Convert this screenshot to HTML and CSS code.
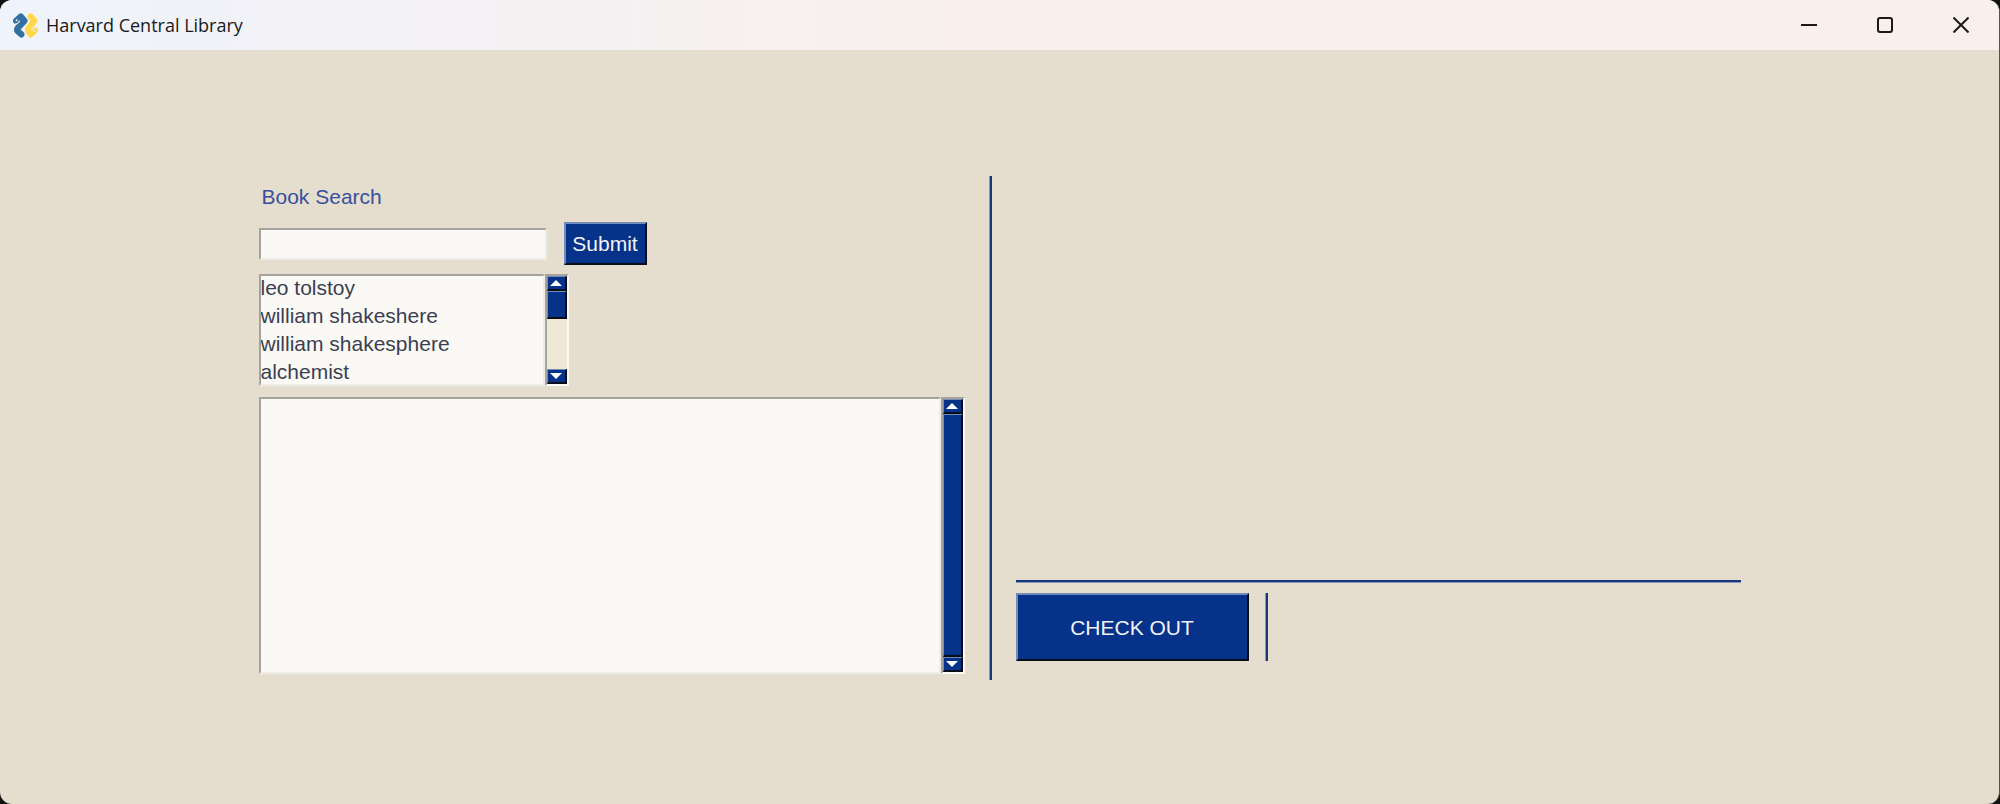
FILE: index.html
```html
<!DOCTYPE html>
<html lang="en">
<head>
<meta charset="utf-8">
<title>Harvard Central Library</title>
<link rel="stylesheet" href="styles.css">
</head>
<body>
<div class="window">
  <header class="titlebar">
    <svg class="app-icon" viewBox="0 0 24 24" aria-hidden="true">
      <g fill="none" stroke-width="6" stroke-linecap="round" stroke-linejoin="round">
        <path stroke="#ffd94a" d="M17 3.500l3.500 4L15 14.500q-1 1.500 0 3l2 3 4-4"/>
        <path stroke="#34709f" d="M3 7.500l4.500-4 3.500 4L4.500 14.500q-1 1.500 0 3l3.500 3"/>
      </g>
      <path fill="none" stroke="#f0f2fa" stroke-width="1" d="M1.500 10.500q3 .5 5-3M22.500 13.500q-3-.5-5 3"/>
      <circle cx="3.500" cy="7" r="1" fill="#f0f2fa"/>
      <circle cx="20.500" cy="17" r="1" fill="#f0f2fa"/>
    </svg>
    <h1 class="title">Harvard Central Library</h1>
    <div class="controls">
      <button class="control" type="button" aria-label="Minimize"><svg class="glyph" viewBox="0 0 16 16"><path d="M0 8h16"/></svg></button>
      <button class="control" type="button" aria-label="Maximize"><svg class="glyph" viewBox="0 0 16 16"><rect x="1" y="1" width="14" height="14" rx="2"/></svg></button>
      <button class="control" type="button" aria-label="Close"><svg class="glyph" viewBox="0 0 16 16"><path d="M.5.5l15 15M15.500.5l-15 15"/></svg></button>
    </div>
  </header>
  <main class="content">
    <div class="columns">
      <section class="search">
        <label class="search-label" for="query">Book Search</label>
        <form class="search-row">
          <input class="field query" id="query" type="text">
          <button class="button submit" type="button">Submit</button>
        </form>
        <div class="scroller suggestions">
          <select class="field list" size="4" aria-label="Suggestions">
            <option>leo tolstoy</option>
            <option>william shakeshere</option>
            <option>william shakesphere</option>
            <option>alchemist</option>
          </select>
          <div class="scrollbar">
            <button class="arrow" type="button" aria-label="Scroll up"><svg class="triangle" viewBox="0 0 12 6"><path d="M6 0l6 6H0z"/></svg></button>
            <div class="thumb thumb-short"></div>
            <button class="arrow arrow-down" type="button" aria-label="Scroll down"><svg class="triangle" viewBox="0 0 12 6"><path d="M0 0h12L6 6z"/></svg></button>
          </div>
        </div>
        <div class="scroller results">
          <textarea class="field output" aria-label="Results"></textarea>
          <div class="scrollbar">
            <button class="arrow" type="button" aria-label="Scroll up"><svg class="triangle" viewBox="0 0 12 6"><path d="M6 0l6 6H0z"/></svg></button>
            <div class="thumb"></div>
            <button class="arrow arrow-down" type="button" aria-label="Scroll down"><svg class="triangle" viewBox="0 0 12 6"><path d="M0 0h12L6 6z"/></svg></button>
          </div>
        </div>
      </section>
      <div class="divider"></div>
      <section class="checkout">
        <div class="rule"></div>
        <div class="checkout-row">
          <button class="button checkout-button" type="button">CHECK OUT</button>
          <div class="divider"></div>
        </div>
      </section>
    </div>
  </main>
</div>
</body>
</html>
```
FILE: styles.css
```css
* { box-sizing: border-box; }
body {
  margin: 0;
  background: #111;
  font: 21px/27px "Liberation Sans", Arial, sans-serif;
}
button, input, select, textarea { font: inherit; margin: 0; }
.window {
  display: flex;
  flex-direction: column;
  min-height: 100vh;
  border-right: 1px solid #55524c;
  border-radius: 12px;
  background: #e5decf;
  overflow: hidden;
}
.titlebar {
  display: flex;
  align-items: center;
  height: 50px;
  padding-left: 13px;
  background: linear-gradient(90deg, #eff3fc 0%, #f3f2f6 18%, #f9f0ec 50%, #f9f0ec 100%);
}
.app-icon { width: 25px; height: 25px; margin-right: 8px; }
.title {
  margin: 0;
  color: #191919;
  font: 400 18px/24px "Open Sans", "Noto Sans", sans-serif;
}
.controls { display: flex; margin-left: auto; }
.control {
  display: grid;
  place-items: center;
  width: 76px;
  height: 50px;
  padding: 0;
  border: 0;
  background: transparent;
}
.glyph { width: 16px; height: 16px; fill: none; stroke: #1b1918; stroke-width: 2; }
.content {
  flex: 1;
  display: flex;
  justify-content: center;
  align-items: center;
  padding-top: 2px;
}
.columns { display: flex; gap: 24px; }
.search {
  display: flex;
  flex-direction: column;
  width: 706px;
  padding: 7px 0 6px;
}
.search-label { padding-left: 3px; color: #38509c; }
.search-row {
  display: flex;
  align-items: center;
  gap: 17px;
  margin: 12px 0 9px;
}
.field {
  border: 2px solid;
  border-color: #a5a39c #efece5 #efece5 #a5a39c;
  border-radius: 0;
  background: #faf9f5;
  color: #3b3f51;
  outline: 0;
  padding: 0;
}
.query { width: 288px; height: 32px; }
.button {
  padding: 0;
  border: 2px solid;
  border-color: #718bbb #080d19 #080d19 #718bbb;
  background: #063289;
  color: #f2f3f7;
}
.submit { width: 83px; height: 43px; }
.scroller { display: flex; }
.suggestions { width: 310px; height: 112px; margin-bottom: 11px; }
.results { height: 277px; }
.list {
  flex: 1;
  min-width: 0;
  appearance: none;
  overflow: hidden;
  scrollbar-width: none;
}
.list option { min-height: 28px; padding: 0; line-height: 28px; }
.output { flex: 1; min-width: 0; resize: none; overflow: hidden; }
.scrollbar {
  display: flex;
  flex-direction: column;
  width: 24px;
  border: 2px solid;
  border-color: #a5a39c #fbf9f4 #fbf9f4 #a5a39c;
  background: #efe8d6;
}
.arrow, .thumb {
  border: 1px solid;
  border-width: 1px 2px 2px 1px;
  border-color: #718bbb #080d19 #080d19 #718bbb;
  background: #063289;
}
.arrow {
  display: grid;
  place-items: center;
  flex: none;
  height: 15px;
  padding: 0;
}
.arrow-down { margin-top: auto; }
.triangle { width: 12px; height: 6px; fill: #fff; }
.thumb { flex: 1; }
.thumb-short { flex: none; height: 28px; }
.divider {
  width: 3px;
  border-left: 1px solid #8797b5;
  background: #17387c;
}
.checkout {
  display: flex;
  flex-direction: column;
  justify-content: flex-end;
  width: 725px;
  padding-bottom: 19px;
}
.rule {
  height: 3px;
  margin-bottom: 10px;
  border-bottom: 1px solid #8797b5;
  background: #17387c;
}
.checkout-row { display: flex; gap: 16px; }
.checkout-button { width: 233px; height: 68px; }
```
